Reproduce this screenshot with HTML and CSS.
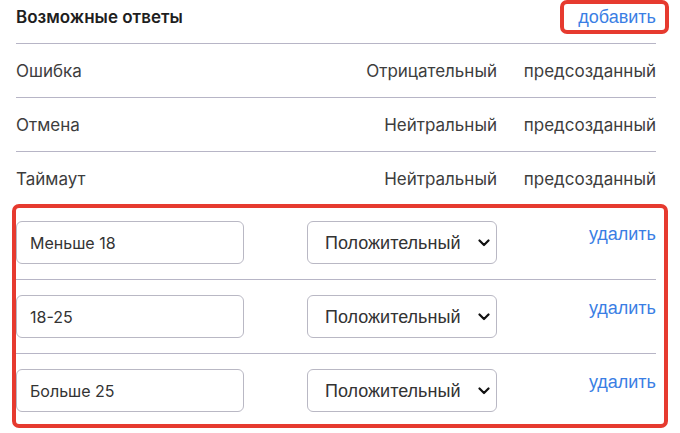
FILE: index.html
```html
<!DOCTYPE html>
<html lang="ru">
<head>
<meta charset="utf-8">
<title>Возможные ответы</title>
<link rel="stylesheet" href="styles.css">
</head>
<body>
<div class="panel">
  <div class="head">
    <div class="title">Возможные ответы</div>
    <a class="link add mark">добавить</a>
  </div>
  <div class="row">
    <div class="name">Ошибка</div>
    <div class="type">Отрицательный</div>
    <div class="state">предсозданный</div>
  </div>
  <div class="row">
    <div class="name">Отмена</div>
    <div class="type">Нейтральный</div>
    <div class="state">предсозданный</div>
  </div>
  <div class="row">
    <div class="name">Таймаут</div>
    <div class="type">Нейтральный</div>
    <div class="state">предсозданный</div>
  </div>
  <div class="group">
    <div class="erow">
      <input class="field" type="text" value="Меньше 18">
      <select class="sel"><option>Положительный</option></select>
      <a class="link del">удалить</a>
    </div>
    <div class="erow">
      <input class="field" type="text" value="18-25">
      <select class="sel"><option>Положительный</option></select>
      <a class="link del">удалить</a>
    </div>
    <div class="erow">
      <input class="field" type="text" value="Больше 25">
      <select class="sel"><option>Положительный</option></select>
      <a class="link del">удалить</a>
    </div>
  </div>
</div>
</body>
</html>
```

FILE: styles.css
```css
* { box-sizing: border-box; }
html, body { margin: 0; padding: 0; background: #ffffff; }
body {
  font-family: Inter, "Noto Sans", sans-serif;
  font-size: 17px;
  color: #3d3d3d;
}
.panel {
  width: 656px;
  padding: 0 0 0 16px;
}
.head {
  display: flex;
  justify-content: space-between;
  align-items: center;
  height: 44px;
  padding-bottom: 9px;
  border-bottom: 1px solid #b7b5c6;
}
.title {
  font-weight: 600;
  color: #1e1e1e;
  line-height: 20px;
}
.link {
  font-family: "Liberation Sans", Arial, sans-serif;
  font-size: 18px;
  color: #3a7ee4;
  line-height: 20px;
  cursor: pointer;
}
.mark { position: relative; }
.mark::after {
  content: "";
  position: absolute;
  left: -18px;
  right: -13px;
  top: -7px;
  bottom: -7px;
  border: 4px solid #e63a2f;
  border-radius: 7px;
}
.row, .erow {
  display: grid;
  grid-template-columns: 1fr 190px 159px;
  border-bottom: 1px solid #b7b5c6;
}
.row {
  height: 54px;
  align-items: center;
  line-height: 20px;
}
.type, .state { justify-self: end; }
.group { position: relative; }
.group::after {
  content: "";
  position: absolute;
  left: -4px;
  right: -12px;
  top: -2px;
  bottom: 0;
  border: 4px solid #e63a2f;
  border-radius: 7px;
  pointer-events: none;
}
.erow {
  padding: 15px 0;
  height: 74px;
  align-items: start;
}
.erow:last-child { border-bottom: none; }
.field {
  width: 228px;
  height: 43px;
  border: 1px solid #b9b8c4;
  border-radius: 6px;
  padding: 0 13px;
  font-family: Inter, "Noto Sans", sans-serif;
  font-size: 16px;
  color: #333333;
  background: #ffffff;
  outline: none;
}
.sel {
  -webkit-appearance: none;
  appearance: none;
  width: 190px;
  height: 43px;
  border: 1px solid #b9b8c4;
  border-radius: 6px;
  padding: 0 24px 0 17px;
  font-family: "Liberation Sans", Arial, sans-serif;
  font-size: 18px;
  color: #333333;
  background-color: #ffffff;
  background-image: url("data:image/svg+xml;utf8,<svg xmlns='http://www.w3.org/2000/svg' width='12' height='8' viewBox='0 0 12 8'><path d='M1.5 1.5 L6 6 L10.5 1.5' fill='none' stroke='%23111' stroke-width='2.2' stroke-linecap='round' stroke-linejoin='round'/></svg>");
  background-repeat: no-repeat;
  background-position: right 6px center;
  background-size: 12px 8px;
}
.del {
  justify-self: end;
  margin-top: 3px;
}
```
